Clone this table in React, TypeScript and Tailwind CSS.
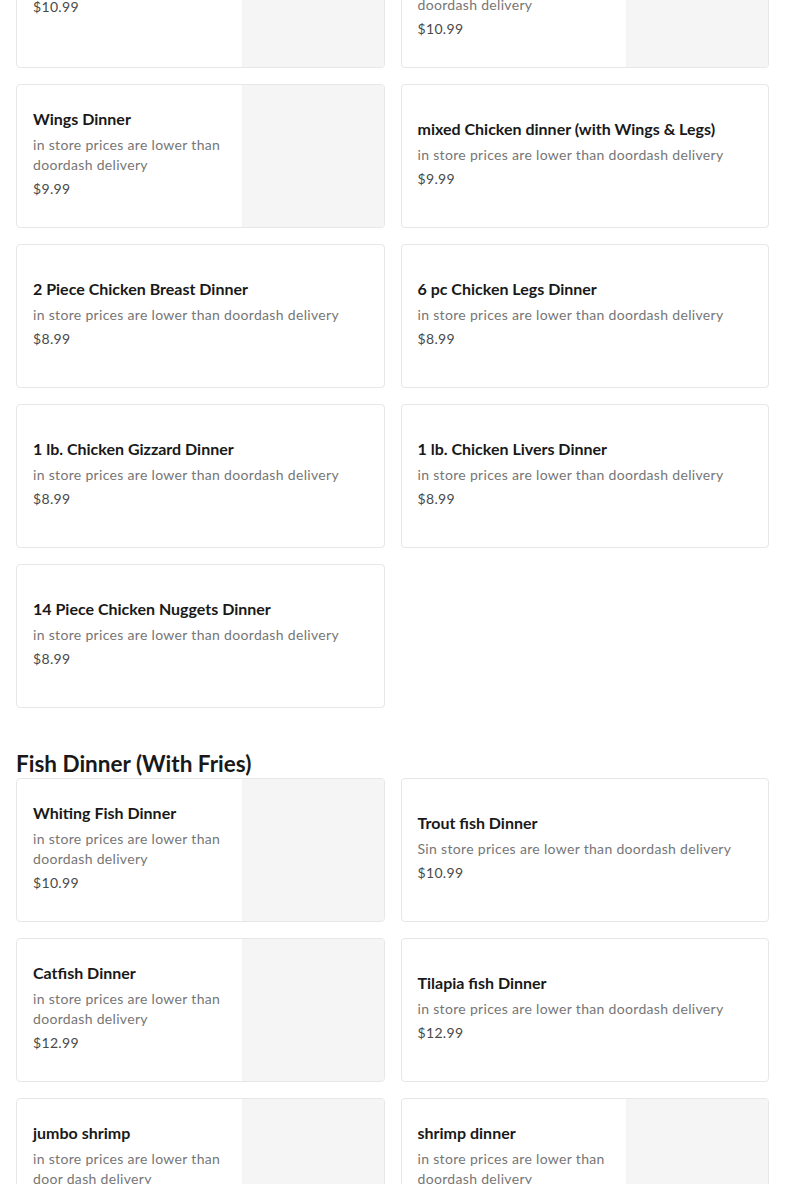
import React from 'react';

type Item = {
  name: string;
  desc: string;
  price: string;
  image?: boolean;
  tail?: boolean;
};

const chicken: Item[] = [
  { name: 'Whole Wings Dinner', desc: 'in store prices are lower than doordash delivery', price: '$10.99', image: true, tail: true },
  { name: 'Chicken Tenders Dinner', desc: 'in store prices are lower than doordash delivery', price: '$10.99', image: true },
  { name: 'Wings Dinner', desc: 'in store prices are lower than doordash delivery', price: '$9.99', image: true },
  { name: 'mixed Chicken dinner (with Wings & Legs)', desc: 'in store prices are lower than doordash delivery', price: '$9.99' },
  { name: '2 Piece Chicken Breast Dinner', desc: 'in store prices are lower than doordash delivery', price: '$8.99' },
  { name: '6 pc Chicken Legs Dinner', desc: 'in store prices are lower than doordash delivery', price: '$8.99' },
  { name: '1 lb. Chicken Gizzard Dinner', desc: 'in store prices are lower than doordash delivery', price: '$8.99' },
  { name: '1 lb. Chicken Livers Dinner', desc: 'in store prices are lower than doordash delivery', price: '$8.99' },
  { name: '14 Piece Chicken Nuggets Dinner', desc: 'in store prices are lower than doordash delivery', price: '$8.99' },
];

const fish: Item[] = [
  { name: 'Whiting Fish Dinner', desc: 'in store prices are lower than doordash delivery', price: '$10.99', image: true },
  { name: 'Trout fish Dinner', desc: 'Sin store prices are lower than doordash delivery', price: '$10.99' },
  { name: 'Catfish Dinner', desc: 'in store prices are lower than doordash delivery', price: '$12.99', image: true },
  { name: 'Tilapia fish Dinner', desc: 'in store prices are lower than doordash delivery', price: '$12.99' },
  { name: 'jumbo shrimp', desc: 'in store prices are lower than door dash delivery', price: '$14.99', image: true },
  { name: 'shrimp dinner', desc: 'in store prices are lower than doordash delivery', price: '$12.99', image: true },
];

const MenuCard = ({ item }: { item: Item }) => {
  return (
    <div className="flex h-[144px] overflow-hidden rounded border border-[#e7e7e7] bg-white">
      <div className="flex min-w-0 flex-1 flex-col justify-center pb-[6px] pl-4 pr-4">
        <p className="text-base leading-6 font-bold tracking-normal text-[#191919]">{item.name}</p>
        <p className="mt-1 text-sm leading-5 text-[#767676]">{item.desc}</p>
        <p className="mt-1 text-sm leading-5 text-[#494949]">{item.price}</p>
        {item.tail ? <div className="h-[44px] shrink-0" /> : null}
      </div>
      {item.image ? <div className="h-full w-[142px] shrink-0 bg-[#f5f5f5]" /> : null}
    </div>
  );
};

const App = () => {
  return (
    <div className="min-h-screen overflow-hidden bg-white font-['Lato',sans-serif] tracking-[0.02em]">
      <div className="-mt-[76px] px-4 pb-10">
        <div className="grid grid-cols-2 gap-4">
          {chicken.map((item) => (
            <MenuCard key={item.name} item={item} />
          ))}
        </div>
        <h2 className="mt-[42px] text-[22.5px] leading-7 font-bold tracking-normal text-[#191919]">
          Fish Dinner (With Fries)
        </h2>
        <div className="grid grid-cols-2 gap-4">
          {fish.map((item) => (
            <MenuCard key={item.name} item={item} />
          ))}
        </div>
      </div>
    </div>
  );
};

export default App;
